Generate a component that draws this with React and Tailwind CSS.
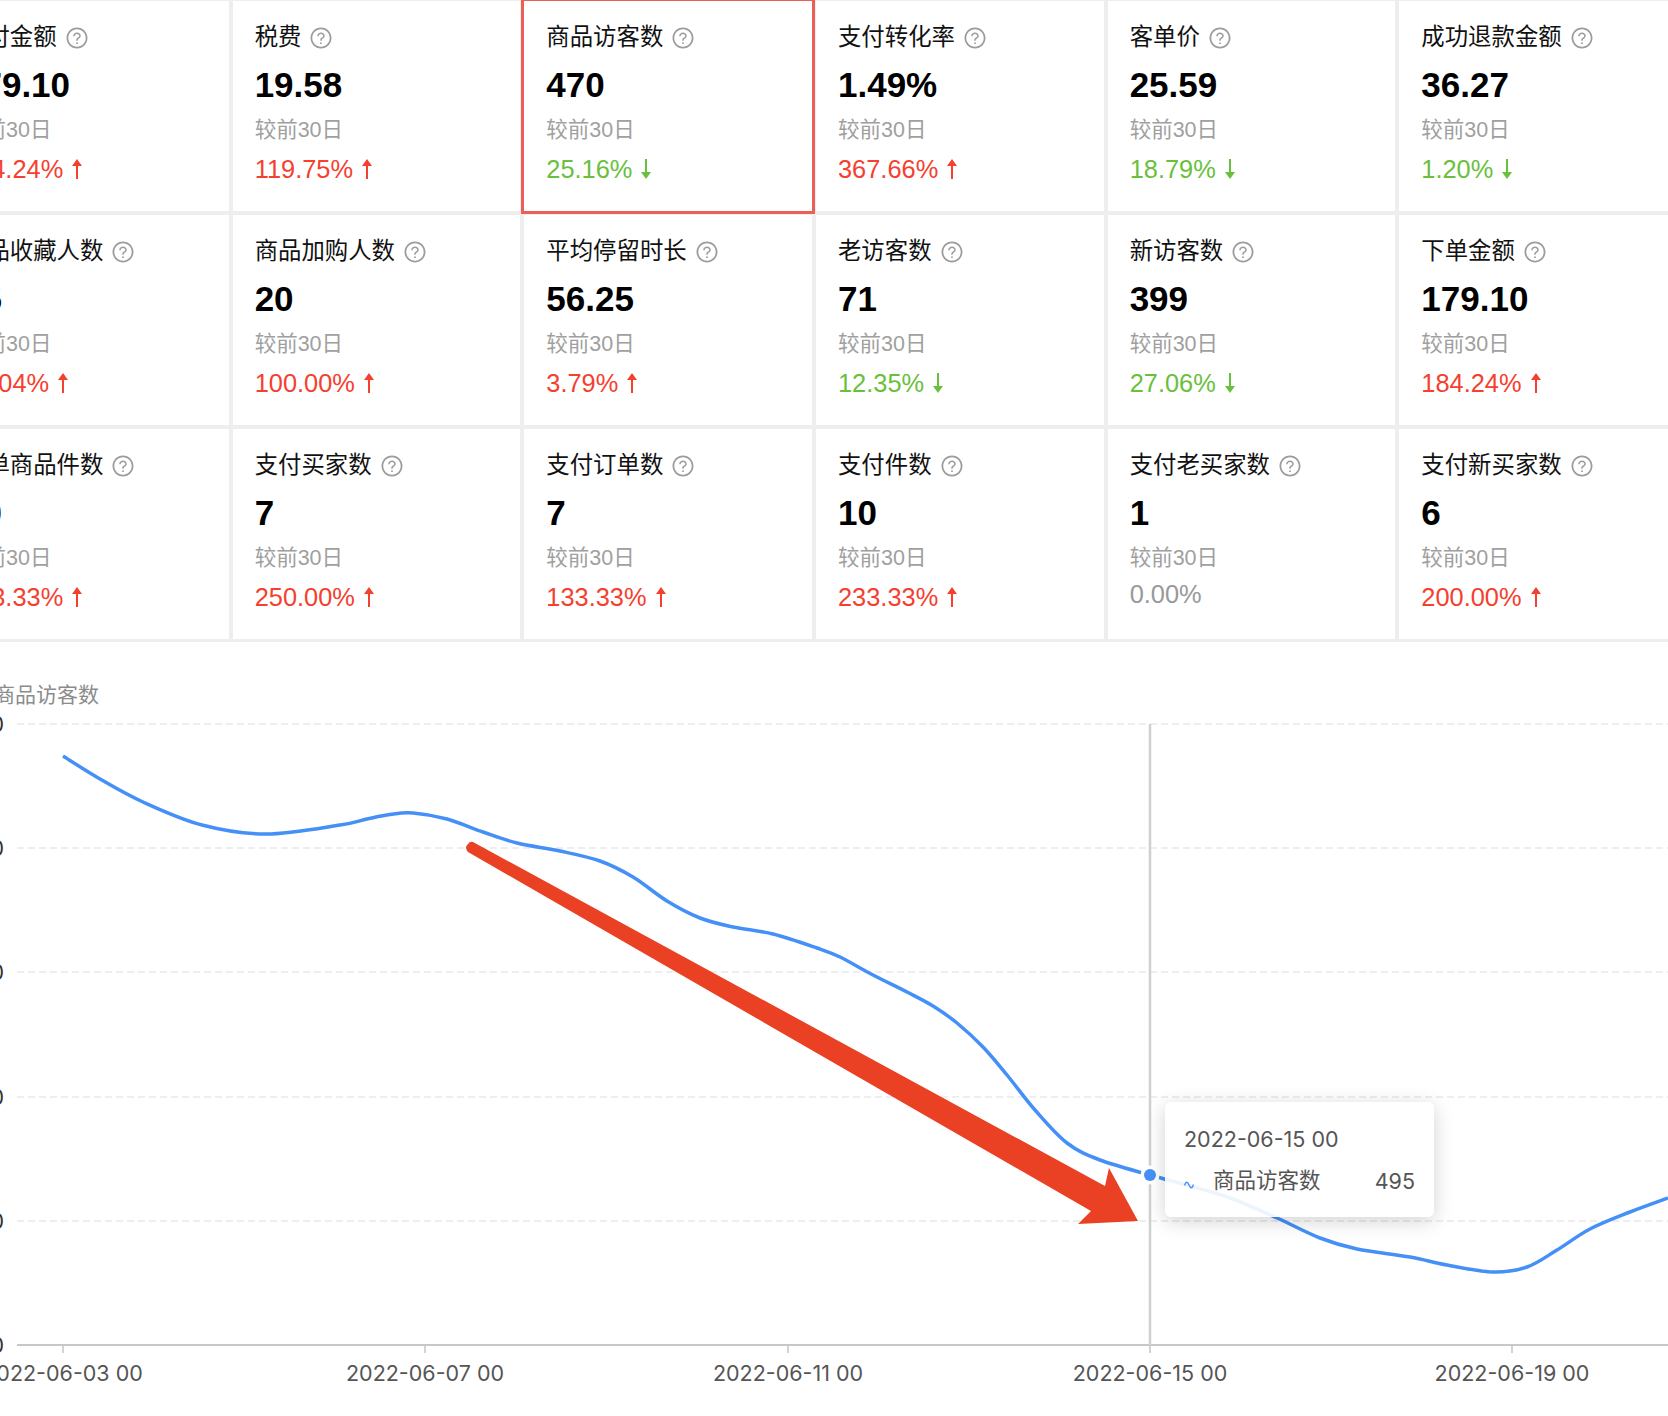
import { AiOutlineQuestionCircle } from 'react-icons/ai';

const metrics = [
  { title: '支付金额', value: '179.10', change: '184.24%', trend: 'up' },
  { title: '税费', value: '19.58', change: '119.75%', trend: 'up' },
  { title: '商品访客数', value: '470', change: '25.16%', trend: 'down', selected: true },
  { title: '支付转化率', value: '1.49%', change: '367.66%', trend: 'up' },
  { title: '客单价', value: '25.59', change: '18.79%', trend: 'down' },
  { title: '成功退款金额', value: '36.27', change: '1.20%', trend: 'down' },
  { title: '商品收藏人数', value: '15', change: '66.04%', trend: 'up' },
  { title: '商品加购人数', value: '20', change: '100.00%', trend: 'up' },
  { title: '平均停留时长', value: '56.25', change: '3.79%', trend: 'up' },
  { title: '老访客数', value: '71', change: '12.35%', trend: 'down' },
  { title: '新访客数', value: '399', change: '27.06%', trend: 'down' },
  { title: '下单金额', value: '179.10', change: '184.24%', trend: 'up' },
  { title: '下单商品件数', value: '20', change: '183.33%', trend: 'up' },
  { title: '支付买家数', value: '7', change: '250.00%', trend: 'up' },
  { title: '支付订单数', value: '7', change: '133.33%', trend: 'up' },
  { title: '支付件数', value: '10', change: '233.33%', trend: 'up' },
  { title: '支付老买家数', value: '1', change: '0.00%', trend: 'flat' },
  { title: '支付新买家数', value: '6', change: '200.00%', trend: 'up' }
];

const trendStyles = {
  up: 'mt-[10px] text-[#f5402f]',
  down: 'mt-[10px] text-[#6abf3d]',
  flat: 'mt-[7px] text-[#999999]'
};

const gridLines = [724, 848, 972, 1097, 1221];
const ticks = [
  { x: 63, label: '2022-06-03 00' },
  { x: 425, label: '2022-06-07 00' },
  { x: 788, label: '2022-06-11 00' },
  { x: 1150, label: '2022-06-15 00' },
  { x: 1512, label: '2022-06-19 00' }
];

const curve = [
  [63, 756], [100, 779], [143, 802], [202, 825], [266, 834], [340, 825], [367, 819], [390, 814.5], [413, 813],
  [447, 819], [483, 832], [517, 843], [560, 851], [600, 861], [633, 877], [667, 901], [700, 918], [733, 927],
  [773, 934], [817, 948], [840, 957], [873, 975], [907, 992], [933, 1006], [957, 1023], [983, 1047],
  [1007, 1075], [1035, 1110], [1067, 1143], [1100, 1160], [1150, 1175], [1190, 1186], [1230, 1198],
  [1277, 1218], [1320, 1238], [1357, 1249], [1410, 1257], [1447, 1265], [1493, 1272], [1527, 1267],
  [1557, 1250], [1590, 1229], [1630, 1212], [1668, 1198]
];

// catmull-rom through the sampled points
const smoothPath = (pts) => {
  let d = `M${pts[0][0]} ${pts[0][1]}`;
  for (let i = 0; i < pts.length - 1; i++) {
    const p0 = pts[Math.max(i - 1, 0)];
    const p1 = pts[i];
    const p2 = pts[i + 1];
    const p3 = pts[Math.min(i + 2, pts.length - 1)];
    const c1x = p1[0] + (p2[0] - p0[0]) / 6;
    const c1y = p1[1] + (p2[1] - p0[1]) / 6;
    const c2x = p2[0] - (p3[0] - p1[0]) / 6;
    const c2y = p2[1] - (p3[1] - p1[1]) / 6;
    d += ` C${c1x} ${c1y} ${c2x} ${c2y} ${p2[0]} ${p2[1]}`;
  }
  return d;
};

const TrendArrow = ({ trend }) => {
  if (trend === 'flat') return null;
  return (
    <svg viewBox="0 0 12 20" className="ml-[8px] h-[20px] w-[12px] fill-current">
      {trend === 'up' ? (
        <path d="M6 0 L11 7 L7 7 L7 20 L5 20 L5 7 L1 7 Z" />
      ) : (
        <path d="M6 20 L11 13 L7 13 L7 0 L5 0 L5 13 L1 13 Z" />
      )}
    </svg>
  );
};

const MetricCard = ({ title, value, change, trend, selected }) => (
  <div
    className={[
      'h-[210px] bg-white pl-[22px] pt-[21px]',
      selected ? 'relative z-10 outline-[3px] outline-[#ea5f57]' : ''
    ].join(' ')}
  >
    <div className="flex h-[32px] items-center text-[23.4px] text-[#111111]">
      <span>{title}</span>
      <AiOutlineQuestionCircle className="ml-[8px] h-[24px] w-[24px] text-[#9c9c9c]" />
    </div>
    <p className="mt-[11px] text-[35px] font-bold leading-[40px] text-black">{value}</p>
    <p className="mt-[11px] text-[21.5px] leading-[28px] text-[#a0a0a0]">较前30日</p>
    <div className={`flex h-[30px] items-center text-[25.4px] ${trendStyles[trend]}`}>
      <span>{change}</span>
      <TrendArrow trend={trend} />
    </div>
  </div>
);

const TrendChart = () => (
  <svg viewBox="0 710 1668 706" className="block h-[706px] w-[1668px]">
    {gridLines.map((y) => (
      <g key={y}>
        <line x1="17" x2="1668" y1={y} y2={y} stroke="#e9e9e9" strokeWidth="1.6" strokeDasharray="7 4" />
        <text x="4" y={y + 8} textAnchor="end" className="fill-[#333333] font-['Inter',sans-serif] text-[21.5px]">0</text>
      </g>
    ))}
    <text x="4" y="1353" textAnchor="end" className="fill-[#333333] font-['Inter',sans-serif] text-[21.5px]">0</text>

    <line x1="17" x2="1668" y1="1345" y2="1345" stroke="#c8c8c8" strokeWidth="2" />
    {ticks.map((tick) => (
      <g key={tick.x}>
        <line x1={tick.x} x2={tick.x} y1="1345" y2="1353" stroke="#c8c8c8" strokeWidth="1.6" />
        <text
          x={tick.x}
          y="1381"
          textAnchor="middle"
          className="fill-[#555555] font-['Inter',sans-serif] text-[21.5px]"
        >
          {tick.label}
        </text>
      </g>
    ))}

    <line x1="1150" x2="1150" y1="724" y2="1345" stroke="#d0d0d0" strokeWidth="2.5" />
    <path d={smoothPath(curve)} fill="none" stroke="#4590f7" strokeWidth="3.5" />
    <circle cx="1150" cy="1175" r="9.5" fill="#ffffff" />
    <circle cx="1150" cy="1175" r="6" fill="#4590f7" />

    {/* hand drawn annotation arrow */}
    <path
      d="M473 842 L1105 1186 L1109 1168 L1138 1221 L1078 1224 L1091 1211 L468 852 Q464 847 468 844 Q470 841 473 842 Z"
      fill="#ea4024"
    />
  </svg>
);

const ChartTooltip = () => (
  <div className="absolute left-[1165px] top-[460px] h-[115px] w-[269px] rounded-[6px] bg-white/90 pl-[19px] pr-[19px] pt-[22px] text-[21.5px] text-[#555555] shadow-[0_4px_20px_rgba(0,0,0,0.18)]">
    <p className="font-['Inter',sans-serif] leading-[30px]">2022-06-15 00</p>
    <div className="mt-[10px] flex h-[34px] items-center">
      <svg viewBox="0 0 10 8" className="mt-[8px] h-[8px] w-[10px]">
        <path d="M0.5 4.5 C2 0 3.5 0.5 5 4 C6.5 7.5 8 8 9.5 3.5" fill="none" stroke="#4590f7" strokeWidth="1.4" />
      </svg>
      <span className="ml-[19px]">商品访客数</span>
      <span className="ml-auto font-['Inter',sans-serif]">495</span>
    </div>
  </div>
);

const App = () => (
  <div className="h-[1416px] w-[1668px] overflow-hidden bg-white font-['Liberation_Sans','Noto_Sans_CJK_SC',sans-serif]">
    <div className="ml-[-59px] grid w-[1746px] grid-cols-6 gap-[4px] bg-[#eeeeee] pb-[3px] pt-px">
      {metrics.map((metric) => (
        <MetricCard key={metric.title} {...metric} />
      ))}
    </div>
    <section className="relative">
      <p className="ml-[-6px] pt-[38px] text-[21px] leading-[30px] text-[#8c8c8c]">商品访客数</p>
      <TrendChart />
      <ChartTooltip />
    </section>
  </div>
);

export default App;
